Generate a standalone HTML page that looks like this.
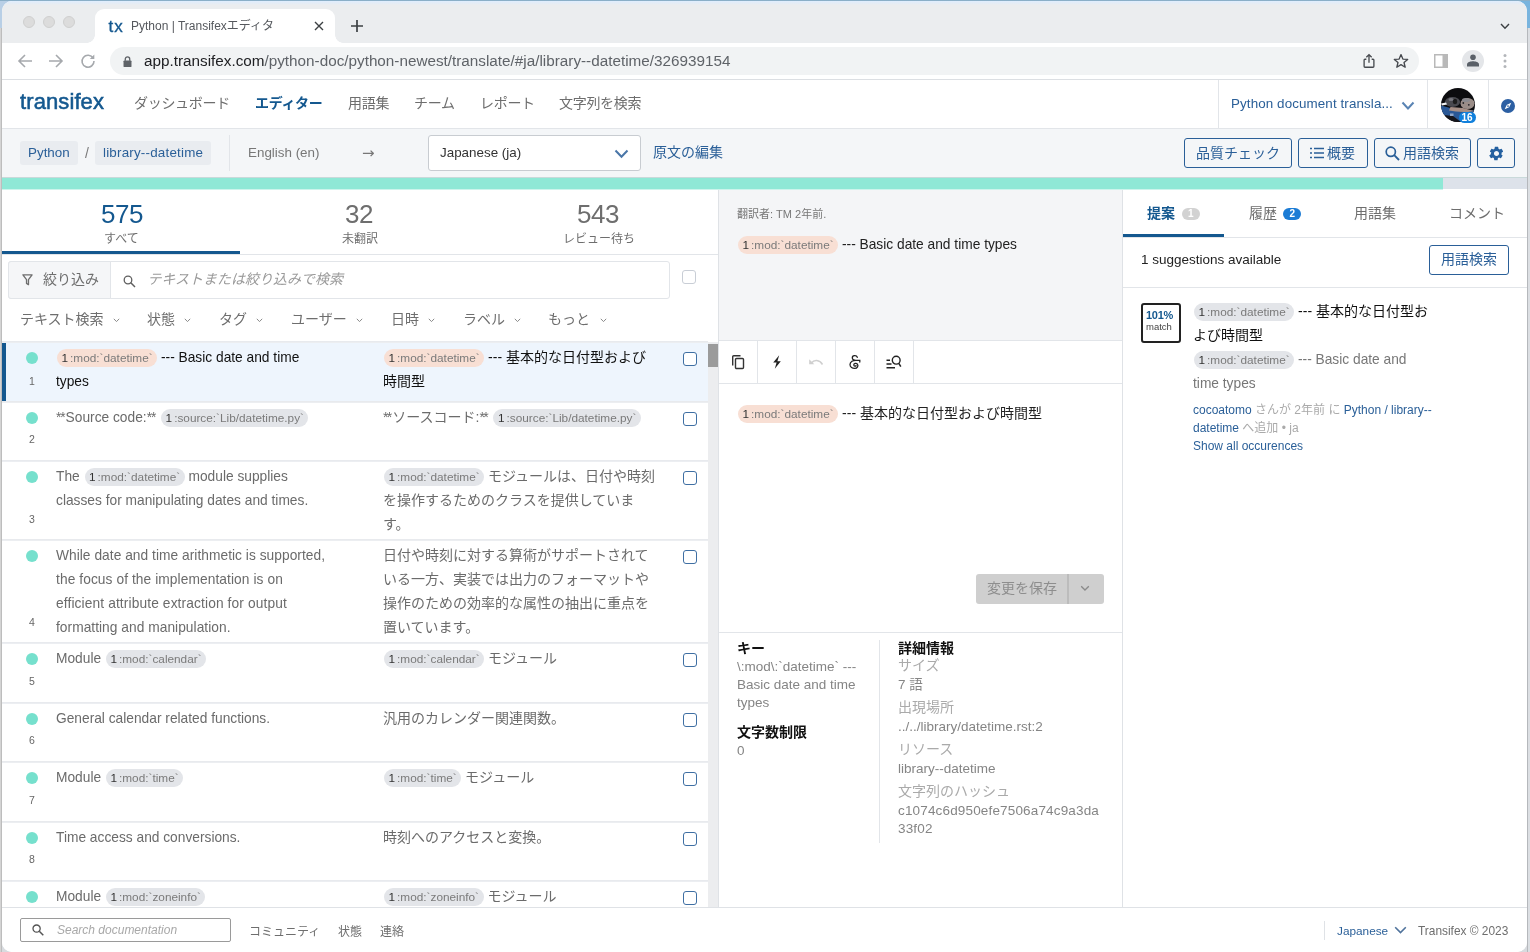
<!DOCTYPE html>
<html lang="ja">
<head>
<meta charset="utf-8">
<title>Python | Transifexエディタ</title>
<style>
*{box-sizing:border-box;margin:0;padding:0}
html,body{width:1530px;height:952px;overflow:hidden}
body{position:relative;background:#c9cdd3;font-family:"Liberation Sans","Noto Sans CJK JP",sans-serif;font-size:14px;color:#6b6b6b;-webkit-font-smoothing:antialiased}
.abs{position:absolute}
.t{position:absolute;white-space:nowrap;line-height:1}
#desk{position:absolute;left:0;top:0;width:1530px;height:952px;background:#d8dbdf}
#desk i{position:absolute;display:block}
#win{will-change:transform;position:absolute;left:2px;top:1px;width:1525px;height:951px;background:#fff;border-radius:10px;overflow:hidden}
/* chrome */
#tabbar{position:absolute;left:0;top:0;width:1525px;height:42px;background:linear-gradient(180deg,#dfeeff 0,#e4ecf6 2px,#ebedef 4px,#ebedef 100%)}
#toolbar{position:absolute;left:0;top:42px;width:1525px;height:37px;background:#fff;border-bottom:1px solid #dcdfe3}
#tab{position:absolute;left:93px;top:8px;width:240px;height:34px;background:#fff;border-radius:9px 9px 0 0}
.light{position:absolute;top:15px;width:12px;height:12px;border-radius:50%;background:#dcdcdc;border:0.5px solid #cfcfcf}
#url{position:absolute;left:108px;top:4px;width:1309px;height:28px;border-radius:14px;background:#f1f3f4}
#o{position:absolute;left:-2px;top:-1px;width:1530px;height:952px}
.num{top:201px;font-size:26px;color:#6e6e6e;letter-spacing:-0.5px}
.lab{top:233px;font-size:12px;color:#6e6e6e}
.fl{top:312px;font-size:14px;color:#6e6e6e}
.dot{width:12px;height:12px;border-radius:50%;background:#76e0cd}
.rn{font-size:10.500px;color:#666;width:10px;text-align:center}
.rs{position:absolute;white-space:nowrap;font-size:14px;line-height:24px;color:#6b6b6b}
.rs.sel{color:#111}
.as{letter-spacing:-1.1px;margin-right:1.1px}
.rs.la{font-size:13.750px;margin-top:1px}
.pill{display:inline-block;height:18px;line-height:18px;border-radius:9px;background:#e3e5e9;color:#7a7a7a;font-size:11.800px;padding:0 4.500px 0 4.500px;vertical-align:0px;margin-left:1px}
.pill b{font-weight:normal;color:#333;margin-right:2px}
.pill.pk{background:#f8dfd4}
.cb{width:14px;height:14px;border:1.500px solid #3f6fa3;border-radius:3px;background:#fff}
.dh{font-size:14px;font-weight:bold;color:#111;margin-top:1px}
.dl{font-size:14px;color:#aaa}
.dv{position:absolute;white-space:nowrap;font-size:13.500px;line-height:18px;color:#858585;margin-top:1px}
.rt{top:206px;font-size:14px;color:#6e6e6e}
.bdg{width:18px;height:11.500px;border-radius:6px}
.bt{top:208.500px;font-size:10px;color:#fff;font-weight:bold}
.meta{position:absolute;white-space:nowrap;font-size:12px;line-height:18px;color:#aaa}
.fo{top:926px;font-size:12px;color:#6e6e6e}
/* app */
#hdr{position:absolute;left:0;top:79px;width:1525px;height:49px;background:#fff;border-bottom:1px solid #e2e5e9}
#crumb{position:absolute;left:0;top:128px;width:1525px;height:49px;background:#f4f6f8}
#prog{position:absolute;left:0;top:177px;width:1525px;height:11px;background:#dde2ea}
#prog i{position:absolute;left:0;top:0;height:11px;width:1441px;background:#8fe8d6}
.blue{color:#2a5f98}
.nav{top:96px;font-size:14px;color:#6e6e6e;letter-spacing:-0.3px}
.vl{width:1px;background:#e2e5e9}
.chipb{background:#e9ecf0;border-radius:3px}
.chip{position:absolute;top:13px;height:25px;border-radius:3px;background:#e6eaef}
.btn{position:absolute;border:1px solid #2a5f98;border-radius:3px;color:#2a5f98;background:transparent}
</style>
</head>
<body>
<div id="desk"><i style="left:0;top:0;width:1530px;height:28px;background:linear-gradient(90deg,#b8cfe6 0,#b8cfe6 60%,#78b4de 100%)"></i><i style="left:0;top:0;width:1530px;height:1px;background:#8aafc8"></i><i style="left:0;top:28px;width:1px;height:924px;background:#d4d4d4"></i><i style="left:1px;top:28px;width:1px;height:924px;background:#bdbdbd"></i><i style="left:1527px;top:28px;width:1px;height:924px;background:#b5b8bc"></i><i style="left:1528px;top:28px;width:2px;height:924px;background:#dcdfe3"></i></div>
<div id="win">
  <div id="tabbar">
    <span class="light" style="left:21px"></span><span class="light" style="left:41px"></span><span class="light" style="left:61px"></span>
    <div class="abs" style="left:85px;top:34px;width:8px;height:8px;background:radial-gradient(circle at 0 0,rgba(255,255,255,0) 7.500px,#fff 8px)"></div><div class="abs" style="left:333px;top:34px;width:8px;height:8px;background:radial-gradient(circle at 100% 0,rgba(255,255,255,0) 7.500px,#fff 8px)"></div>
    <div id="tab">
      <span class="t" id="fav" style="left:13.500px;top:8.500px;font-size:17px;color:#14588f;letter-spacing:1px;-webkit-text-stroke:0.35px #14588f">tx</span>
      <span class="t" id="ttl" style="left:36px;top:11px;font-size:12px;color:#55585d">Python | Transifexエディタ</span>
      <svg class="abs" style="left:218px;top:11px" width="12" height="12" viewBox="0 0 12 12"><path d="M2 2 L10 10 M10 2 L2 10" stroke="#3c4043" stroke-width="1.4" fill="none"/></svg>
    </div>
    <svg class="abs" style="left:348px;top:18px" width="14" height="14" viewBox="0 0 14 14"><path d="M7 1 V13 M1 7 H13" stroke="#3c4043" stroke-width="1.7" fill="none"/></svg>
    <svg class="abs" style="left:1498px;top:22px" width="10" height="7" viewBox="0 0 10 7"><path d="M1 1 L5 5.200 L9 1" stroke="#3c4043" stroke-width="1.400" fill="none"/></svg>
  </div>
  <div id="toolbar">
    <svg class="abs" style="left:15px;top:10px" width="16" height="16" viewBox="0 0 16 16"><path d="M15 8 H2 M8 2 L2 8 L8 14" stroke="#a6a9ad" stroke-width="1.6" fill="none"/></svg>
    <svg class="abs" style="left:46px;top:10px" width="16" height="16" viewBox="0 0 16 16"><path d="M1 8 H14 M8 2 L14 8 L8 14" stroke="#a6a9ad" stroke-width="1.6" fill="none"/></svg>
    <svg class="abs" style="left:78px;top:10px" width="16" height="16" viewBox="0 0 16 16"><path d="M13.2 5.2 A6 6 0 1 0 14 8" stroke="#a6a9ad" stroke-width="1.6" fill="none"/><path d="M14.3 1.5 V6 H9.8 Z" fill="#a6a9ad"/></svg>
    <div id="url">
      <svg class="abs" style="left:13px;top:9px" width="9" height="11.500" viewBox="0 0 10 13"><rect x="0.5" y="5" width="9" height="7.5" rx="1" fill="#5f6368"/><path d="M2.5 5.5 V3.5 A2.5 2.5 0 0 1 7.500 3.500 V5.5" stroke="#5f6368" stroke-width="1.5" fill="none"/></svg>
      <span class="t" id="urlt" style="left:34px;top:6px;font-size:15.280px;color:#5f6368"><span style="color:#202124">app.transifex.com</span>/python-doc/python-newest/translate/#ja/library--datetime/326939154</span>
      <svg class="abs" style="left:1251px;top:6px" width="16" height="16" viewBox="0 0 18 18"><path d="M6 7 H4.500 A1 1 0 0 0 3.500 8 V15 A1 1 0 0 0 4.500 16 H13.5 A1 1 0 0 0 14.5 15 V8 A1 1 0 0 0 13.5 7 H12 M9 11 V2 M6 4.800 L9 1.800 L12 4.800" stroke="#474a4f" stroke-width="1.5" fill="none"/></svg>
      <svg class="abs" style="left:1283px;top:6px" width="16" height="16" viewBox="0 0 18 18"><path d="M9 1.800 L11.100 6.800 L16.500 7.200 L12.400 10.700 L13.700 16 L9 13.100 L4.300 16 L5.600 10.700 L1.500 7.200 L6.900 6.800 Z" stroke="#474a4f" stroke-width="1.5" fill="none" stroke-linejoin="round"/></svg>
    </div>
    <svg class="abs" style="left:1432px;top:11px" width="14" height="14" viewBox="0 0 14 14"><rect x="0.75" y="0.75" width="12.5" height="12.500" fill="#fff" stroke="#b9b9b9" stroke-width="1.5"/><rect x="8.500" y="0" width="5.500" height="14" fill="#b9b9b9"/></svg>
    <div class="abs" style="left:1460px;top:7px;width:22px;height:22px;border-radius:50%;background:#e4e6e9"></div>
    <svg class="abs" style="left:1465px;top:11px" width="12" height="13" viewBox="0 0 12 13"><circle cx="6" cy="3.300" r="2.800" fill="#5a6068"/><path d="M0 12.500 V10.500 C0 8 4 7.300 6 7.300 C8 7.300 12 8 12 10.500 V12.500 Z" fill="#5a6068"/></svg>
    <svg class="abs" style="left:1501px;top:10px" width="4" height="16" viewBox="0 0 4 16"><circle cx="2" cy="2.500" r="1.500" fill="#b3b6ba"/><circle cx="2" cy="8" r="1.500" fill="#b3b6ba"/><circle cx="2" cy="13.500" r="1.500" fill="#b3b6ba"/></svg>
  </div>
  <div id="hdr"></div>
  <div id="crumb"></div>
  <div id="prog"><i></i></div>
  <div class="abs" style="left:0;top:176px;width:1525px;height:1px;background:#c9d9da"></div><div class="abs" style="left:0;top:188px;width:1441px;height:1px;background:#cdf4ec;z-index:3"></div>
  <div id="o">
<span class="t" id="logo" style="left:20px;top:91px;font-size:22px;color:#14588f;letter-spacing:0.1px;-webkit-text-stroke:0.55px #14588f">transifex</span>
<span class="t nav" id="n1" style="left:134px">ダッシュボード</span>
<span class="t nav" id="n2" style="left:255px;color:#14588f;font-weight:bold">エディター</span>
<span class="t nav" id="n3" style="left:348px">用語集</span>
<span class="t nav" id="n4" style="left:414px">チーム</span>
<span class="t nav" id="n5" style="left:480px">レポート</span>
<span class="t nav" id="n6" style="left:559px">文字列を検索</span>
<div class="abs vl" style="left:1218px;top:80px;height:48px"></div>
<span class="t blue" id="org" style="left:1231px;top:97px;font-size:13.400px;letter-spacing:0.1px">Python document transla...</span>
<svg class="abs" style="left:1401px;top:101px" width="14" height="10" viewBox="0 0 14 10"><path d="M1.500 1.500 L7 7.500 L12.500 1.500" stroke="#5a84b4" stroke-width="2" fill="none"/></svg>
<div class="abs vl" style="left:1427px;top:80px;height:48px"></div>
<svg class="abs" id="ava" style="left:1441px;top:88px" width="34" height="34" viewBox="0 0 34 34"><defs><clipPath id="avc"><circle cx="17" cy="17" r="17"/></clipPath><filter id="avb" x="-20%" y="-20%" width="140%" height="140%"><feGaussianBlur stdDeviation="0.7"/></filter></defs><g clip-path="url(#avc)"><rect width="34" height="34" fill="#0c0c0f"/><g filter="url(#avb)"><path d="M0 17.500 L13 21 L34 22.500 V34 H0 Z" fill="#2c5896"/><path d="M3 27 L12 28 L20 34 H5 Z" fill="#16161c"/><path d="M8 22.500 L9.500 19 L22 20 L33 23 L26 24.200 L15 23.500 Z" fill="#a68f86"/><ellipse cx="11.500" cy="14" rx="7.500" ry="5" fill="#4a4a50"/><ellipse cx="14" cy="13.500" rx="2.200" ry="2.800" fill="#1a1a1e"/><ellipse cx="10" cy="11.500" rx="2.500" ry="1.500" fill="#77777e"/><ellipse cx="26.500" cy="15.500" rx="7" ry="5.500" fill="#9a8d88"/><ellipse cx="25" cy="12" rx="4" ry="2" fill="#8b8b90"/><circle cx="22.300" cy="15" r="0.900" fill="#26262a"/><circle cx="27.800" cy="16.800" r="0.900" fill="#26262a"/><path d="M0 15.500 L5 14.500 L6 16.500 L1 17.500 Z" fill="#f2f2f4"/><rect x="9" y="25.500" width="3.500" height="2.500" fill="#8fa6c8"/></g></g></svg>
<div class="abs" style="left:1459px;top:112px;width:17px;height:11px;border-radius:5.500px;background:#1180dc"></div>
<span class="t" id="bdg" style="left:1461.500px;top:112.500px;font-size:10px;font-weight:bold;color:#fff">16</span>
<div class="abs vl" style="left:1488px;top:80px;height:48px"></div>
<svg class="abs" style="left:1501px;top:98.500px" width="14" height="14" viewBox="0 0 16 16"><circle cx="8" cy="8" r="8" fill="#2c5fa3"/><path d="M11.800 4.200 L9.300 9.300 L4.200 11.800 L6.700 6.700 Z" fill="#fff"/><circle cx="8" cy="8" r="1" fill="#2c5fa3"/></svg>
<div class="abs chipb" style="left:20px;top:141px;width:58px;height:24px"></div>
<span class="t blue" id="c1" style="left:28px;top:146px;font-size:13.400px">Python</span>
<span class="t" id="c2" style="left:85px;top:146px;font-size:14px;color:#7a7a7a">/</span>
<div class="abs chipb" style="left:95px;top:141px;width:116px;height:24px"></div>
<span class="t blue" id="c3" style="left:103px;top:146px;font-size:13.400px;letter-spacing:0.2px">library--datetime</span>
<div class="abs vl" style="left:229px;top:135px;height:36px"></div>
<span class="t" id="c4" style="left:248px;top:146px;font-size:13.400px;color:#777">English (en)</span>
<span class="t" id="c5" style="left:362px;top:145.500px;font-size:15px;color:#777;font-family:'DejaVu Sans',sans-serif">→</span>
<div class="abs" style="left:428px;top:135px;width:213px;height:36px;background:#fff;border:1px solid #c8ccd1;border-radius:3px"></div>
<span class="t" id="c6" style="left:440px;top:146px;font-size:13.400px;color:#333">Japanese (ja)</span>
<svg class="abs" style="left:614px;top:149px" width="15" height="10" viewBox="0 0 15 10"><path d="M1.500 1.500 L7.500 7.800 L13.500 1.500" stroke="#4a76a8" stroke-width="2" fill="none"/></svg>
<span class="t blue" id="c7" style="left:653px;top:145px;font-size:14px">原文の編集</span>
<div class="btn" style="left:1184px;top:138px;width:108px;height:30px"></div>
<span class="t blue" id="b1" style="left:1196px;top:146px;font-size:14px">品質チェック</span>
<div class="btn" style="left:1298px;top:138px;width:70px;height:30px"></div>
<svg class="abs" style="left:1310px;top:147px" width="14" height="12" viewBox="0 0 14 12"><path d="M0 1.500 H2 M4 1.500 H14 M0 6 H2 M4 6 H14 M0 10.500 H2 M4 10.500 H14" stroke="#2a5f98" stroke-width="1.600" fill="none"/></svg>
<span class="t blue" id="b2" style="left:1327px;top:146px;font-size:14px">概要</span>
<div class="btn" style="left:1374px;top:138px;width:97px;height:30px"></div>
<svg class="abs" style="left:1385px;top:146px" width="15" height="15" viewBox="0 0 15 15"><circle cx="5.800" cy="5.800" r="4.600" stroke="#2a5f98" stroke-width="1.700" fill="none"/><path d="M9.200 9.200 L14 14" stroke="#2a5f98" stroke-width="1.900"/></svg>
<span class="t blue" id="b3" style="left:1403px;top:146px;font-size:14px">用語検索</span>
<div class="btn" style="left:1477px;top:138px;width:38px;height:30px"></div>
<svg class="abs" id="gear" style="left:1487.500px;top:144.500px" width="17" height="17" viewBox="0 0 24 24"><path fill="#2460a0" d="M19.140 12.940c.04-.3.060-.61.060-.94 0-.32-.020-.64-.070-.94l2.030-1.580a.49.49 0 0 0 .12-.61l-1.920-3.320a.488.488 0 0 0-.59-.22l-2.390.96c-.5-.38-1.030-.7-1.620-.94l-.36-2.540a.484.484 0 0 0-.48-.41h-3.840c-.24 0-.43.170-.47.410l-.36 2.540c-.59.240-1.130.57-1.620.94l-2.390-.96c-.22-.080-.47 0-.59.220L2.740 8.870c-.12.210-.080.470.12.610l2.030 1.580c-.5.300-.9.630-.9.940s.2.640.07.940l-2.030 1.580a.49.49 0 0 0-.12.610l1.920 3.320c.12.220.37.290.59.220l2.390-.96c.5.380 1.030.7 1.620.94l.36 2.540c.5.240.24.410.48.410h3.840c.24 0 .44-.17.470-.41l.36-2.540c.59-.24 1.130-.56 1.620-.94l2.390.96c.22.080.47 0 .59-.22l1.920-3.320c.12-.22.070-.47-.12-.61l-2.010-1.580zM12 15.600c-1.980 0-3.600-1.620-3.600-3.600s1.620-3.600 3.600-3.600 3.600 1.620 3.600 3.600-1.620 3.600-3.600 3.600z"/></svg>
<div class="abs" style="left:2px;top:189px;width:716px;height:719px;background:#fff"></div>
<span class="t num" id="s1" style="left:101px;color:#14588f">575</span>
<span class="t lab" id="s1l" style="left:104px">すべて</span>
<span class="t num" id="s2" style="left:345px">32</span>
<span class="t lab" id="s2l" style="left:342px">未翻訳</span>
<span class="t num" id="s3" style="left:577px">543</span>
<span class="t lab" id="s3l" style="left:563px">レビュー待ち</span>
<div class="abs" style="left:2px;top:254px;width:716px;height:1px;background:#e2e5e9"></div>
<div class="abs" style="left:2px;top:251px;width:238px;height:3px;background:#14588f"></div>
<div class="abs" style="left:8px;top:261px;width:662px;height:38px;border:1px solid #e2e5e9;border-radius:3px;background:#fff"></div>
<div class="abs" style="left:8px;top:261px;width:103px;height:38px;border:1px solid #e2e5e9;border-radius:3px 0 0 3px;background:#f5f6f8"></div>
<svg class="abs" style="left:21.500px;top:273.500px" width="11" height="12" viewBox="0 0 10 11"><path d="M0.8 0.8 H9.2 L5.900 5.200 V9.800 L4.100 8.600 V5.200 Z" stroke="#6e6e6e" stroke-width="1.200" fill="none" stroke-linejoin="round"/></svg>
<span class="t" id="f1" style="left:43px;top:272px;font-size:14px;color:#6e6e6e">絞り込み</span>
<svg class="abs" style="left:123px;top:275px" width="13" height="13" viewBox="0 0 13 13"><circle cx="5" cy="5" r="3.800" stroke="#5f5f5f" stroke-width="1.300" fill="none"/><path d="M7.800 7.800 L12 12" stroke="#5f5f5f" stroke-width="1.500"/></svg>
<span class="t" id="f2" style="left:147.500px;top:272px;font-size:14px;color:#9a9a9a;font-style:italic">テキストまたは絞り込みで検索</span>
<div class="abs" style="left:682px;top:270px;width:14px;height:14px;border:1px solid #c9ced6;border-radius:3px;background:#fff"></div>
<span class="t fl" id="l0" style="left:20px">テキスト検索</span>
<svg class="abs" style="left:113px;top:318px" width="7" height="5" viewBox="0 0 7 5"><path d="M0.8 0.8 L3.500 3.600 L6.200 0.8" stroke="#8a8a8a" stroke-width="1" fill="none"/></svg>
<span class="t fl" id="l1" style="left:147px">状態</span>
<svg class="abs" style="left:184px;top:318px" width="7" height="5" viewBox="0 0 7 5"><path d="M0.8 0.8 L3.500 3.600 L6.200 0.8" stroke="#8a8a8a" stroke-width="1" fill="none"/></svg>
<span class="t fl" id="l2" style="left:219px">タグ</span>
<svg class="abs" style="left:256px;top:318px" width="7" height="5" viewBox="0 0 7 5"><path d="M0.8 0.8 L3.500 3.600 L6.200 0.8" stroke="#8a8a8a" stroke-width="1" fill="none"/></svg>
<span class="t fl" id="l3" style="left:291px">ユーザー</span>
<svg class="abs" style="left:356px;top:318px" width="7" height="5" viewBox="0 0 7 5"><path d="M0.8 0.8 L3.500 3.600 L6.200 0.8" stroke="#8a8a8a" stroke-width="1" fill="none"/></svg>
<span class="t fl" id="l4" style="left:391px">日時</span>
<svg class="abs" style="left:428px;top:318px" width="7" height="5" viewBox="0 0 7 5"><path d="M0.8 0.8 L3.500 3.600 L6.200 0.8" stroke="#8a8a8a" stroke-width="1" fill="none"/></svg>
<span class="t fl" id="l5" style="left:463px">ラベル</span>
<svg class="abs" style="left:514px;top:318px" width="7" height="5" viewBox="0 0 7 5"><path d="M0.8 0.8 L3.500 3.600 L6.200 0.8" stroke="#8a8a8a" stroke-width="1" fill="none"/></svg>
<span class="t fl" id="l6" style="left:548px">もっと</span>
<svg class="abs" style="left:600px;top:318px" width="7" height="5" viewBox="0 0 7 5"><path d="M0.8 0.8 L3.500 3.600 L6.200 0.8" stroke="#8a8a8a" stroke-width="1" fill="none"/></svg>
<div class="abs" style="left:2px;top:342px;width:706px;height:59px;background:#eef5fd"></div>
<div class="abs" style="left:2px;top:342px;width:4px;height:59px;background:#14588f"></div>
<div class="abs" style="left:2px;top:401px;width:706px;height:2px;background:linear-gradient(#e6e8ec,#eef0f3)"></div>
<div class="abs dot" style="left:26px;top:352px"></div>
<span class="t rn" id="rn1" style="left:27px;top:376px">1</span>
<div class="rs sel la" id="src1" style="left:56px;top:345px"><span class="pill pk"><b>1</b>:mod:`datetime`</span> --- Basic date and time<br>types</div>
<div class="rs sel" id="tr1" style="left:383px;top:345px"><span class="pill pk"><b>1</b>:mod:`datetime`</span> --- 基本的な日付型および<br>時間型</div>
<div class="abs cb" style="left:683px;top:352px"></div>
<div class="abs" style="left:2px;top:460px;width:706px;height:2px;background:linear-gradient(#e6e8ec,#eef0f3)"></div>
<div class="abs dot" style="left:26px;top:412px"></div>
<span class="t rn" id="rn2" style="left:27px;top:434px">2</span>
<div class="rs la" id="src2" style="left:56px;top:405px"><span class="as">**</span>Source code:<span class="as">**</span> <span class="pill "><b>1</b>:source:`Lib/datetime.py`</span></div>
<div class="rs" id="tr2" style="left:383px;top:405px"><span class="as" style="letter-spacing:-1.7px;margin-right:1.7px">**</span>ソースコード:<span class="as" style="letter-spacing:-1.7px;margin-right:1.7px">**</span> <span class="pill "><b>1</b>:source:`Lib/datetime.py`</span></div>
<div class="abs cb" style="left:683px;top:412px"></div>
<div class="abs" style="left:2px;top:539px;width:706px;height:2px;background:linear-gradient(#e6e8ec,#eef0f3)"></div>
<div class="abs dot" style="left:26px;top:471px"></div>
<span class="t rn" id="rn3" style="left:27px;top:514px">3</span>
<div class="rs la" id="src3" style="left:56px;top:464px">The <span class="pill "><b>1</b>:mod:`datetime`</span> module supplies<br>classes for manipulating dates and times.</div>
<div class="rs" id="tr3" style="left:383px;top:464px"><span class="pill "><b>1</b>:mod:`datetime`</span> モジュールは、日付や時刻<br>を操作するためのクラスを提供していま<br>す。</div>
<div class="abs cb" style="left:683px;top:471px"></div>
<div class="abs" style="left:2px;top:642px;width:706px;height:2px;background:linear-gradient(#e6e8ec,#eef0f3)"></div>
<div class="abs dot" style="left:26px;top:550px"></div>
<span class="t rn" id="rn4" style="left:27px;top:617px">4</span>
<div class="rs la" id="src4" style="left:56px;top:543px"><span style="letter-spacing:0.035px">While date and time arithmetic is supported,</span><br><span style="letter-spacing:0.08px">the focus of the implementation is on</span><br><span style="letter-spacing:0.12px">efficient attribute extraction for output</span><br><span style="letter-spacing:0.035px">formatting and manipulation.</span></div>
<div class="rs" id="tr4" style="left:383px;top:543px">日付や時刻に対する算術がサポートされて<br>いる一方、実装では出力のフォーマットや<br>操作のための効率的な属性の抽出に重点を<br>置いています。</div>
<div class="abs cb" style="left:683px;top:550px"></div>
<div class="abs" style="left:2px;top:702px;width:706px;height:2px;background:linear-gradient(#e6e8ec,#eef0f3)"></div>
<div class="abs dot" style="left:26px;top:653px"></div>
<span class="t rn" id="rn5" style="left:27px;top:676px">5</span>
<div class="rs la" id="src5" style="left:56px;top:646px">Module <span class="pill "><b>1</b>:mod:`calendar`</span></div>
<div class="rs" id="tr5" style="left:383px;top:646px"><span class="pill "><b>1</b>:mod:`calendar`</span> モジュール</div>
<div class="abs cb" style="left:683px;top:653px"></div>
<div class="abs" style="left:2px;top:761px;width:706px;height:2px;background:linear-gradient(#e6e8ec,#eef0f3)"></div>
<div class="abs dot" style="left:26px;top:713px"></div>
<span class="t rn" id="rn6" style="left:27px;top:735px">6</span>
<div class="rs la" id="src6" style="left:56px;top:706px">General calendar related functions.</div>
<div class="rs" id="tr6" style="left:383px;top:706px">汎用のカレンダー関連関数。</div>
<div class="abs cb" style="left:683px;top:713px"></div>
<div class="abs" style="left:2px;top:821px;width:706px;height:2px;background:linear-gradient(#e6e8ec,#eef0f3)"></div>
<div class="abs dot" style="left:26px;top:772px"></div>
<span class="t rn" id="rn7" style="left:27px;top:795px">7</span>
<div class="rs la" id="src7" style="left:56px;top:765px">Module <span class="pill "><b>1</b>:mod:`time`</span></div>
<div class="rs" id="tr7" style="left:383px;top:765px"><span class="pill "><b>1</b>:mod:`time`</span> モジュール</div>
<div class="abs cb" style="left:683px;top:772px"></div>
<div class="abs" style="left:2px;top:880px;width:706px;height:2px;background:linear-gradient(#e6e8ec,#eef0f3)"></div>
<div class="abs dot" style="left:26px;top:832px"></div>
<span class="t rn" id="rn8" style="left:27px;top:854px">8</span>
<div class="rs la" id="src8" style="left:56px;top:825px">Time access and conversions.</div>
<div class="rs" id="tr8" style="left:383px;top:825px">時刻へのアクセスと変換。</div>
<div class="abs cb" style="left:683px;top:832px"></div>
<div class="abs" style="left:2px;top:940px;width:706px;height:2px;background:linear-gradient(#e6e8ec,#eef0f3)"></div>
<div class="abs dot" style="left:26px;top:891px"></div>
<span class="t rn" id="rn9" style="left:27px;top:914px">9</span>
<div class="rs la" id="src9" style="left:56px;top:884px">Module <span class="pill "><b>1</b>:mod:`zoneinfo`</span></div>
<div class="rs" id="tr9" style="left:383px;top:884px"><span class="pill "><b>1</b>:mod:`zoneinfo`</span> モジュール</div>
<div class="abs cb" style="left:683px;top:891px"></div>
<div class="abs" style="left:2px;top:341px;width:706px;height:2px;background:linear-gradient(#e6e8ec,#eef0f3)"></div>
<div class="abs" style="left:708px;top:342px;width:10px;height:566px;background:#ecedef"></div>
<div class="abs" style="left:708px;top:344px;width:10px;height:23px;background:#9b9b9b"></div>
<div class="abs" style="left:718px;top:189px;width:404px;height:719px;background:#fff;border-left:1px solid #dfe2e6"></div>
<div class="abs" style="left:719px;top:189px;width:403px;height:151px;background:#f4f5f7"></div>
<span class="t" id="m0" style="left:737px;top:209px;font-size:11px;color:#777">翻訳者: TM 2年前.</span>
<div class="rs sel la" id="m1" style="left:737px;top:232px;color:#222"><span class="pill pk"><b>1</b>:mod:`datetime`</span> --- Basic date and time types</div>
<div class="abs" style="left:719px;top:340px;width:403px;height:44px;background:#fff;border-top:1px solid #e2e5e9;border-bottom:1px solid #e2e5e9"></div>
<div class="abs" style="left:757px;top:341px;width:1px;height:42px;background:#e2e5e9"></div>
<div class="abs" style="left:796px;top:341px;width:1px;height:42px;background:#e2e5e9"></div>
<div class="abs" style="left:835px;top:341px;width:1px;height:42px;background:#e2e5e9"></div>
<div class="abs" style="left:874px;top:341px;width:1px;height:42px;background:#e2e5e9"></div>
<div class="abs" style="left:913px;top:341px;width:1px;height:42px;background:#e2e5e9"></div>
<svg class="abs" style="left:731px;top:354px" width="14" height="16" viewBox="0 0 14 16"><path d="M9.500 1.700 H2.700 A1 1 0 0 0 1.700 2.700 V11.500" stroke="#333" stroke-width="1.400" fill="none"/><rect x="4.500" y="4.500" width="8" height="10" rx="1" stroke="#333" stroke-width="1.400" fill="none"/></svg>
<svg class="abs" style="left:772px;top:355px" width="10" height="14" viewBox="0 0 10 14"><path d="M7.200 0.300 L1.200 7.600 H4.600 L2.800 13.700 L8.800 6.200 H5.400 Z" fill="#222"/></svg>
<svg class="abs" style="left:808px;top:357px" width="16" height="10" viewBox="0 0 16 10"><path d="M3.500 6 C6 2.500 11.500 2.500 14.500 7.500" stroke="#cfcfcf" stroke-width="1.500" fill="none"/><path d="M1.200 2.200 V7.300 H6.300 Z" fill="#cfcfcf"/></svg>
<svg class="abs" style="left:848px;top:354px" width="13" height="16" viewBox="0 0 13 16"><path d="M9.300 3.300 C8.500 0.900 4.200 1.200 4.300 3.900 C4.400 5.800 6.600 6.400 8.200 6.300 M8.200 6.300 C5.200 6.200 2 7.600 2 10.600 C2 13.300 4.600 14.400 6.600 14.400 C9.500 14.400 10.600 11.800 9.400 10.100 C8.300 8.700 5.700 9.300 5.800 11 C5.900 12.300 7.600 12.400 8 11.600 M8.200 6.300 H11.800 V8" stroke="#222" stroke-width="1.300" fill="none" stroke-linecap="round"/></svg>
<svg class="abs" style="left:886px;top:354.700px" width="16" height="15" viewBox="0 0 16 15"><circle cx="10.200" cy="5.200" r="3.900" stroke="#222" stroke-width="1.400" fill="none"/><path d="M12.800 8.300 L14.800 11.600" stroke="#222" stroke-width="1.500"/><path d="M0.500 5.300 H4 M0.500 9 H5.500 M0.500 12.700 H9" stroke="#222" stroke-width="1.400"/></svg>
<div class="rs sel" id="m2" style="left:737px;top:401px;color:#222"><span class="pill pk"><b>1</b>:mod:`datetime`</span> --- 基本的な日付型および時間型</div>
<div class="abs" style="left:975.500px;top:574px;width:128px;height:30px;border-radius:3px;background:#cfcfcf"></div>
<div class="abs" style="left:1067px;top:574px;width:2px;height:30px;background:#bcbcbc"></div>
<span class="t" id="m3" style="left:987px;top:581px;font-size:14px;color:#8e8e8e">変更を保存</span>
<svg class="abs" style="left:1080px;top:585px" width="10" height="7" viewBox="0 0 10 7"><path d="M1.200 1.200 L5 5 L8.800 1.200" stroke="#8a8a8a" stroke-width="1.300" fill="none"/></svg>
<div class="abs" style="left:719px;top:632px;width:403px;height:1px;background:#e2e5e9"></div>
<div class="abs" style="left:879px;top:640px;width:1px;height:203px;background:#e2e5e9"></div>
<span class="t dh" id="d1" style="left:737px;top:640px">キー</span>
<div class="dv" id="d2" style="left:737px;top:657px">\:mod\:`datetime` ---<br>Basic date and time<br>types</div>
<span class="t dh" id="d3" style="left:737px;top:724px">文字数制限</span>
<div class="dv" id="d4" style="left:737px;top:741px">0</div>
<span class="t dh" id="d5" style="left:898px;top:640px">詳細情報</span>
<span class="t dl" id="d6" style="left:898px;top:658px">サイズ</span>
<div class="dv" id="d7" style="left:898px;top:675px">7 語</div>
<span class="t dl" id="d8" style="left:898px;top:700px">出現場所</span>
<div class="dv" id="d9" style="left:898px;top:717px">../../library/datetime.rst:2</div>
<span class="t dl" id="d10" style="left:898px;top:742px">リソース</span>
<div class="dv" id="d11" style="left:898px;top:759px">library--datetime</div>
<span class="t dl" id="d12" style="left:898px;top:784px">文字列のハッシュ</span>
<div class="dv" id="d13" style="left:898px;top:801px;letter-spacing:0.16px">c1074c6d950efe7506a74c9a3da<br>33f02</div>
<div class="abs" style="left:1122px;top:189px;width:405px;height:719px;background:#fff;border-left:1px solid #dfe2e6"></div>
<div class="abs" style="left:1123px;top:237px;width:404px;height:1px;background:#e2e5e9"></div>
<div class="abs" style="left:1123px;top:234px;width:101px;height:3px;background:#14588f"></div>
<span class="t rt" id="r1" style="left:1147px;color:#14588f;font-weight:bold">提案</span>
<div class="abs bdg" style="left:1181.500px;top:208px;background:#d2d2d2"></div><span class="t bt" id="r1b" style="left:1188px">1</span>
<span class="t rt" id="r2" style="left:1249px">履歴</span>
<div class="abs bdg" style="left:1283px;top:208px;background:#1c7cd5"></div><span class="t bt" id="r2b" style="left:1289.500px">2</span>
<span class="t rt" id="r3" style="left:1354px">用語集</span>
<span class="t rt" id="r4" style="left:1449px">コメント</span>
<span class="t" id="r5" style="left:1141px;top:253px;font-size:13.500px;color:#222">1 suggestions available</span>
<div class="btn" style="left:1429px;top:245px;width:80px;height:30px;background:#fff"></div>
<span class="t blue" id="r6" style="left:1441px;top:252px;font-size:14px">用語検索</span>
<div class="abs" style="left:1123px;top:287px;width:404px;height:1px;background:#e2e5e9"></div>
<div class="abs" style="left:1141px;top:303px;width:40px;height:40px;border:2px solid #222;border-radius:3px;background:#fff"></div>
<span class="t" id="r7" style="left:1146px;top:310px;font-size:11px;font-weight:bold;color:#14588f;letter-spacing:-0.3px">101%</span>
<span class="t" id="r8" style="left:1146px;top:322px;font-size:9.500px;color:#444">match</span>
<div class="rs sel" id="r9" style="left:1193px;top:299px;color:#111"><span class="pill "><b>1</b>:mod:`datetime`</span> --- 基本的な日付型お<br>よび時間型</div>
<div class="rs la" id="r10" style="left:1193px;top:347px;color:#777"><span class="pill "><b>1</b>:mod:`datetime`</span> --- Basic date and<br>time types</div>
<div class="meta" id="r11" style="left:1193px;top:401px"><span class="blue">cocoatomo</span> さんが 2年前 に <span class="blue">Python / library--</span><br><span class="blue">datetime</span> へ追加 • ja<br><span class="blue">Show all occurences</span></div>
<div class="abs" style="left:2px;top:907px;width:1525px;height:45px;background:#fff;border-top:1px solid #dfe2e6"></div>
<div class="abs" style="left:20px;top:918px;width:211px;height:24px;border:1px solid #9a9a9a;border-radius:2px;background:#fff"></div>
<svg class="abs" style="left:32px;top:924px" width="12" height="12" viewBox="0 0 12 12"><circle cx="4.600" cy="4.600" r="3.600" stroke="#555" stroke-width="1.300" fill="none"/><path d="M7.300 7.300 L11.300 11.300" stroke="#555" stroke-width="1.500"/></svg>
<span class="t" id="ft1" style="left:57px;top:924px;font-size:12px;color:#a8a8a8;font-style:italic">Search documentation</span>
<span class="t fo" id="ft2" style="left:249px">コミュニティ</span>
<span class="t fo" id="ft3" style="left:338px">状態</span>
<span class="t fo" id="ft4" style="left:380px">連絡</span>
<div class="abs" style="left:1324px;top:921px;width:1px;height:19px;background:#dfe2e6"></div>
<span class="t blue" id="ft5" style="left:1337px;top:926px;font-size:11.800px">Japanese</span>
<svg class="abs" style="left:1394px;top:926px" width="13" height="8" viewBox="0 0 13 8"><path d="M1.200 1.200 L6.500 6.500 L11.800 1.200" stroke="#50739c" stroke-width="1.600" fill="none"/></svg>
<span class="t" id="ft6" style="left:1418px;top:926px;font-size:11.900px;color:#6e6e6e">Transifex © 2023</span>
  </div>
</div>
</body>
</html>
